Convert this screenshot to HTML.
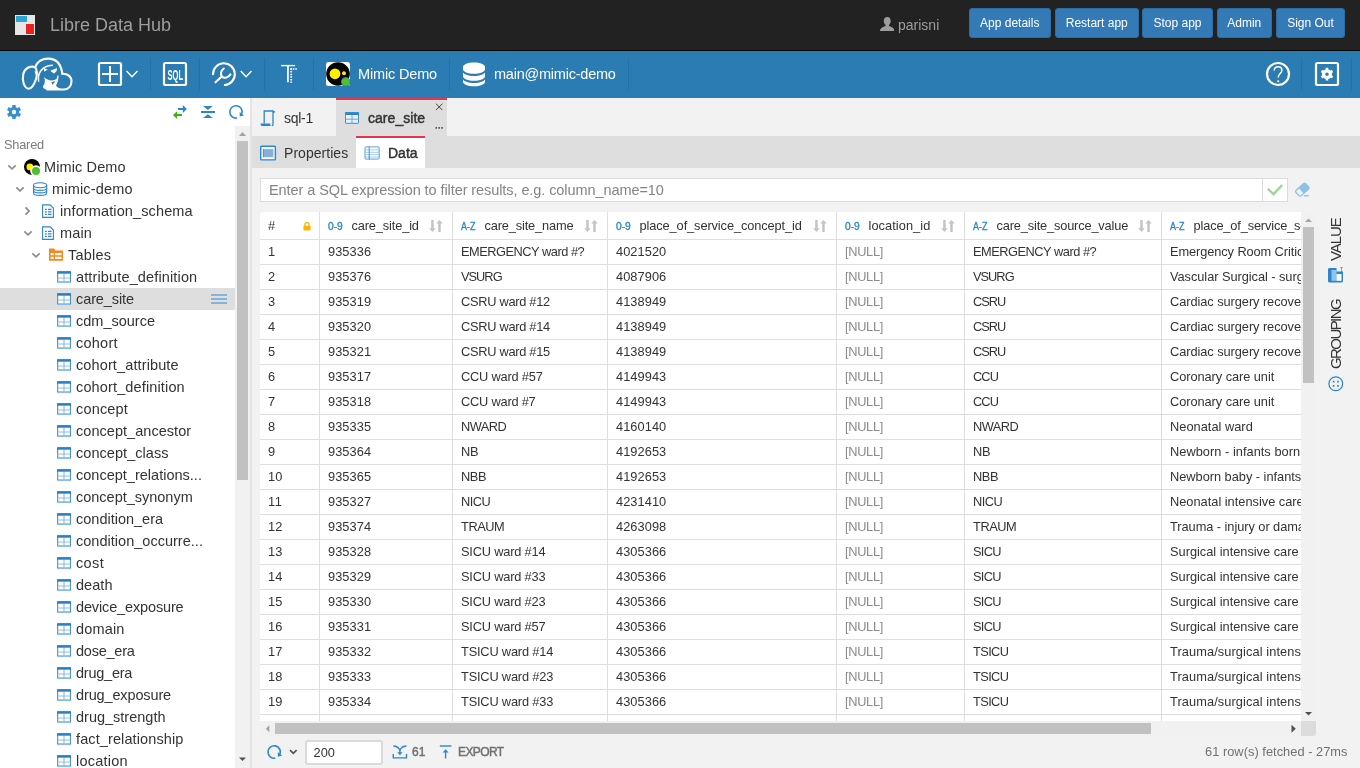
<!DOCTYPE html>
<html lang="en">
<head>
<meta charset="utf-8">
<title>Libre Data Hub</title>
<style>
*{box-sizing:border-box;margin:0;padding:0}
html{background:#f2f2f2}
html,body{width:1360px;height:768px;overflow:hidden;background:#f2f2f2;font-family:"Liberation Sans",sans-serif;color:#333}
body{will-change:transform}
.abs{position:absolute}
/* navbar */
#nav{position:absolute;left:0;top:0;width:1360px;height:51px;background:#222;border-bottom:1px solid #080808}
#logo{position:absolute;left:15px;top:15px;width:20px;height:20px;background:#e6e6e6}
#logo i{position:absolute;display:block}
#brand{position:absolute;left:50px;top:15px;font-size:18px;line-height:21px;color:#9d9d9d;white-space:nowrap}
#user{position:absolute;left:898px;top:15px;font-size:14px;line-height:20px;color:#9d9d9d;white-space:nowrap}
.btn{position:absolute;top:8px;height:30px;background:#337ab7;border:1px solid #2e6da4;border-radius:3px;color:#fff;font-size:12px;line-height:28px;text-align:center;white-space:nowrap}
/* blue toolbar */
#bar{position:absolute;left:0;top:51px;width:1360px;height:47px;background:#2a7cb3}
#bar .sep{position:absolute;top:7px;width:1px;height:32px;background:#2670a5}
#bar .txt{position:absolute;top:12.600px;font-size:14.500px;line-height:20px;color:#fff;white-space:nowrap}
/* sidebar */
#side{position:absolute;left:0;top:98px;width:235px;height:670px;background:#fff;overflow:hidden}
#sbar{position:absolute;left:235px;top:126px;width:15px;height:642px;background:#f1f1f1}
#sthumb{position:absolute;left:2px;top:15px;width:11px;height:339px;background:#c1c1c1}
#split{position:absolute;left:250px;top:98px;width:2px;height:670px;background:#e4e4e4}
.trow{position:absolute;left:0;width:235px;height:22px;font-size:14.500px;line-height:22px;white-space:nowrap}
.trow.sel{background:#dedede}
.tl{position:absolute;top:0;color:#333}
.ti{position:absolute;left:56px;top:3px;width:16px;height:16px}
.menu{position:absolute;left:211px;top:6px;width:16px;height:10px}
.chev{position:absolute;width:10px;height:10px}
/* main */
#tabs{position:absolute;left:252px;top:98px;width:1108px;height:38px;background:#f2f2f2}
.med{-webkit-text-stroke:0.450px currentColor}
.tabtxt{position:absolute;font-size:14px;line-height:20px;white-space:nowrap;color:#333}
#tab2{position:absolute;left:84px;top:0;width:111px;height:38px;background:#dedede;border-top:2px solid #e9334d}
#sub{position:absolute;left:252px;top:136px;width:1108px;height:32px;background:#dedede}
#sub2{position:absolute;left:104px;top:0;width:69px;height:32px;background:#fff;border-top:2px solid #e9334d}
#filter{position:absolute;left:260px;top:178px;width:1003px;height:24px;background:#fff;border:1px solid #dcdcdc;font-size:14.500px;line-height:22px;color:#848484;padding-left:8px;white-space:nowrap}
#ok{position:absolute;left:1262px;top:178px;width:26px;height:24px;background:#fff;border:1px solid #dcdcdc}
/* grid */
#grid{position:absolute;left:260px;top:212px;width:1041px;height:509px;background:#fff;overflow:hidden;border-radius:3px 0 0 0}
.th,.tr{position:relative;width:1100px;border-bottom:1px solid #dedede}
.th{height:28px}
.tr{height:25px}
.c{position:absolute;top:0;height:100%;border-right:1px solid #dedede;font-size:12.800px;line-height:24px;padding-left:8px;white-space:nowrap;overflow:hidden;color:#333}
.th .c{line-height:27px}
.c0{left:0;width:60px;padding-left:8px}
.c1{left:60px;width:133px}
.c2{left:193px;width:155px}
.c3{left:348px;width:229px}
.c4{left:577px;width:128px}
.c5{left:705px;width:197px}
.c6{left:902px;width:200px}
.nul{color:#8a8a8a}
.ty{display:inline-block;width:14px;margin-right:9.500px;color:#2b86cc;font-size:11px;line-height:12px;letter-spacing:0;white-space:nowrap;position:relative;top:-0.500px;transform-origin:0 50%;transform:scaleX(.93);-webkit-text-stroke:0.350px #2b86cc}
.ty.az{transform:scaleX(.820)}
.srt{position:absolute;right:9px;top:8px;width:14px;height:12px}
#vsb{position:absolute;left:1301px;top:212px;width:15px;height:509px;background:#f1f1f1}
#hsb{position:absolute;left:260px;top:721px;width:1041px;height:15px;background:#f1f1f1}
#corner{position:absolute;left:1301px;top:721px;width:15px;height:15px;background:#dcdcdc;border-radius:0 0 3px 0}
.vt{position:absolute;font-size:15px;color:#333;transform:rotate(-90deg);transform-origin:0 0;white-space:nowrap;line-height:16px}
#foot{position:absolute;left:252px;top:737px;width:1108px;height:31px;background:#f2f2f2}
#foot .t{position:absolute;font-size:13px;line-height:16px;white-space:nowrap;color:#717171}
#cnt{position:absolute;left:52.500px;top:2.500px;width:78.500px;height:25px;background:#fff;border:2px solid #dadada;border-radius:3px;font-size:12.800px;line-height:21px;padding-left:7px;color:#333}
</style>
</head>
<body>
<!-- top navbar -->
<div id="nav">
  <div id="logo"><i style="left:1px;top:1px;width:11.300px;height:6.200px;background:#2ea5d6"></i><i style="left:11.200px;top:8.500px;width:8.300px;height:10.700px;background:#e8201f"></i></div>
  <div id="brand">Libre Data Hub</div>
  <svg class="abs" style="left:879.800px;top:16.800px;width:14.500px;height:14.400px" viewBox="0 0 14.500 14.400"><path d="M7.250 0c-2.100 0-3.450 1.600-3.450 3.900 0 1.600 0.700 3.200 1.750 4.100v1.100c-2 0.800-4.500 1.600-5.200 3.200-0.300 0.700-0.350 1.500-0.350 2.100h14.500c0-0.600-0.050-1.400-0.350-2.100-0.700-1.600-3.200-2.400-5.200-3.200v-1.100c1.050-0.900 1.750-2.500 1.750-4.100 0-2.300-1.350-3.900-3.450-3.900z" fill="#9d9d9d"/></svg>
  <div id="user">parisni</div>
  <div class="btn" style="left:969px;width:81.500px">App details</div>
  <div class="btn" style="left:1055px;width:83.500px">Restart app</div>
  <div class="btn" style="left:1142px;width:71px">Stop app</div>
  <div class="btn" style="left:1216.500px;width:55.500px">Admin</div>
  <div class="btn" style="left:1276px;width:69px">Sign Out</div>
</div>
<!-- blue bar -->
<div id="bar">
<svg class="abs" style="left:0;top:0;width:1360px;height:47px" viewBox="0 51 1360 47" fill="none" stroke="#fff">
  <!-- cloud logo -->
  <g stroke-width="2.100" stroke-linecap="round" stroke-linejoin="round">
    <path d="M35.200 67.200C31 65.500 25 67.500 23.300 74C21.800 80.500 24 87.800 28.600 88.800C32 88.500 34.500 84 36.200 78.500C37.200 75 37 70 35.200 67.200z"/>
    <path d="M35.200 67.200C37 61.500 42.500 58.600 48.200 58.600C55.500 58.600 61 63.500 62.300 73.800"/>
    <path d="M62.300 73.800C67.500 73.500 71.500 76.500 71.500 81.200C71.500 86 68.500 89.500 64 89.500L47 89.500"/>
    <path d="M38.600 81.200C37.500 74 41 66 52.400 65.200" stroke-width="1.500"/>
  </g>
  <g fill="#fff" stroke="none">
    <path d="M34.500 71.500L37 71L35.800 75z"/>
    <path d="M44 68.300L47.700 69.400L44.200 71.700z"/>
    <path d="M50.300 70.700L57 68L56.600 71L54 73.800z"/>
    <path d="M44 77C47 80.500 53 81.500 56.500 79L57.500 75.500L58.600 75.400C58.500 79 57.500 83 56 85.500C57 87.500 60 89 64 89.600L47.200 89.900C44 89 42.500 87.500 43 86.300C45 84 45.500 80.500 44 77z"/>
  </g>
  <path d="M51.300 82.300L55.500 81L52.600 84.800z" fill="#2a7cb3" stroke="none"/>
  <!-- plus box -->
  <rect x="99" y="63" width="22" height="22" rx="1.500" stroke-width="2.200"/>
  <path d="M102 74h16M110 66v16" stroke-width="2"/>
  <path d="M126.500 71.100l5.500 5.600 5.500-5.600" stroke-width="1.400"/>
  <!-- sql -->
  <rect x="164" y="63" width="22" height="22" rx="1.500" stroke-width="2.200"/>
  <text x="175.300" y="79.700" text-anchor="middle" font-family="Liberation Sans, sans-serif" font-weight="bold" font-size="14.500" fill="#fff" stroke="none" textLength="15.500" lengthAdjust="spacingAndGlyphs">SQL</text>
  <!-- history/search -->
  <path d="M213 74.200A10.900 10.900 0 1 1 224.900 85.050" stroke-width="2.100" stroke-linecap="round"/>
  <path d="M215.500 82.300l5.400-5.100" stroke-width="2.100" stroke-linecap="round"/>
  <path d="M223.800 68.500C221 70.500 220 74 222 76.600C224.500 78.800 228.500 77.500 230.400 74.400" stroke-width="2.100" stroke-linecap="round"/>
  <path d="M240.700 71.100l5.400 5.600 5.400-5.600" stroke-width="1.400"/>
  <!-- T icon -->
  <path d="M281 65.600h14.100" stroke-width="1.400"/>
  <path d="M287.900 65v17.300" stroke-width="1.800"/>
  <path d="M290.300 69.100h6.700" stroke-width="1.500" stroke-dasharray="1.600 0.900"/>
  <path d="M291.200 68.350v14.500" stroke-width="1.800" stroke-dasharray="1.500 1.150"/>
  <!-- mimic icon -->
  <rect x="326" y="62" width="24" height="24" rx="2.500" fill="#fff" stroke="none"/>
  <circle cx="338" cy="74" r="11.800" fill="#000" stroke="none"/>
  <circle cx="335" cy="73.800" r="5.400" fill="#ffee00" stroke="none"/>
  <circle cx="344" cy="73.300" r="2" fill="#ffee00" stroke="none"/>
  <circle cx="345.700" cy="81.800" r="4.800" fill="#2a7cb3" stroke="none"/>
  <circle cx="345.700" cy="81.800" r="3.900" fill="#4fc22a" stroke="none"/>
  <!-- db icon -->
  <g fill="#fff" stroke="none">
    <path d="M463 67c0-2.500 4.900-4.500 11-4.500s11 2 11 4.500v2.300c0 2.500-4.900 4.500-11 4.500s-11-2-11-4.500z"/>
    <path d="M463 72.500c1.500 2.200 5.800 3.600 11 3.600s9.500-1.400 11-3.600v3.800c0 2.500-4.900 4.500-11 4.500s-11-2-11-4.500z"/>
    <path d="M463 79.500c1.500 2.200 5.800 3.600 11 3.600s9.500-1.400 11-3.600v2.300c0 2.500-4.900 4.500-11 4.500s-11-2-11-4.500z"/>
  </g>
  <!-- help -->
  <circle cx="1278" cy="74" r="11" stroke-width="2.200"/>
  <path d="M1274.200 70.600c0-2.300 1.700-3.800 3.900-3.800 2.300 0 3.800 1.500 3.800 3.500 0 3-3.700 3.500-3.700 7.200" stroke-width="1.500"/>
  <circle cx="1278.200" cy="81.300" r="1.100" fill="#fff" stroke="none"/>
  <!-- settings -->
  <rect x="1316" y="63" width="22" height="22" rx="1.500" stroke-width="2.200"/>
  <g transform="translate(1327 74.200)">
    <circle r="3.400" stroke-width="3.200"/>
    <g stroke-width="2.600">
      <path d="M0-6.400v2.500M0 6.400v-2.500M-5.540-3.200l2.200 1.250M5.540 3.200l-2.200-1.250M-5.540 3.200l2.200-1.250M5.540-3.200l-2.200 1.250"/>
    </g>
  </g>
</svg>
  <div class="sep" style="left:150px"></div>
  <div class="sep" style="left:199px"></div>
  <div class="sep" style="left:264px"></div>
  <div class="sep" style="left:313px"></div>
  <div class="sep" style="left:449px"></div>
  <div class="sep" style="left:628px"></div>
  <div class="sep" style="left:1301px"></div>
  <div class="sep" style="left:1351px"></div>
  <div class="txt" style="left:358px"><span style="letter-spacing:-0.16px">Mimic Demo</span></div>
  <div class="txt" style="left:494px"><span style="letter-spacing:-0.23px">main@mimic-demo</span></div>
</div>
<!-- sidebar -->
<div id="side"></div>
<div class="abs" style="left:235px;top:98px;width:15px;height:28px;background:#fff"></div>
<svg class="abs" style="left:0;top:98px;width:250px;height:170px" viewBox="0 98 250 170" fill="none">
  <!-- gear -->
  <g transform="translate(14 112)" stroke="#338fd0">
    <circle r="3.700" stroke-width="3"/>
    <path d="M0-7.100v2.500M0 7.100v-2.500M-6.150-3.550l2.200 1.250M6.150 3.550l-2.200-1.250M-6.150 3.550l2.200-1.250M6.150-3.550l-2.200 1.250" stroke-width="3.400"/>
  </g>
  <!-- arrows -->
  <path d="M178 108h5v1.900h-5zM182.800 105l4.100 3.950-4.100 3.950z" fill="#2d86cc"/>
  <path d="M182 114.100h-5v1.900h5zM177.100 111.200l-4.200 3.850 4.200 3.850z" fill="#3db50e"/>
  <!-- collapse -->
  <path d="M201 111h14v2h-14zM203 106h9.800l-4.900 4zM203 118h9.800l-4.900-3.800z" fill="#2d86cc"/>
  <!-- refresh -->
  <path d="M237.100 118A6.200 6.200 0 1 1 241.900 113.800" stroke="#2d86cc" stroke-width="1.600"/>
  <path d="M239.700 112.100v4.500l4.300-1.200z" fill="#2d86cc"/>
  <!-- chevrons -->
  <g stroke="#8c8c8c" stroke-width="1.700">
    <path d="M8.300 165.300l3.700 3.500 3.700-3.500"/>
    <path d="M16.300 187.300l3.700 3.500 3.700-3.500"/>
    <path d="M25.500 207.300l3.600 3.700-3.600 3.700"/>
    <path d="M24.300 231.300l3.700 3.500 3.700-3.500"/>
    <path d="M32.300 253.300l3.700 3.500 3.700-3.500"/>
  </g>
  <!-- mimic icon -->
  <circle cx="32" cy="166.900" r="8" fill="#000"/>
  <circle cx="29.900" cy="166.900" r="3.400" fill="#ffee00"/>
  <circle cx="36" cy="171" r="5.800" fill="#fff"/>
  <circle cx="36" cy="171" r="4" fill="#4fc22a"/>
  <!-- db icon -->
  <g stroke="#2d86cc" stroke-width="1.100" fill="#fff">
    <path d="M33.500 185.300v7.600c0 1.400 2.900 2.500 6.600 2.500s6.600-1.100 6.600-2.500v-7.600"/>
    <ellipse cx="40.100" cy="185.300" rx="6.600" ry="2.500"/>
    <path d="M33.500 187.900c0 1.400 2.900 2.500 6.600 2.500s6.600-1.100 6.600-2.500M33.500 190.400c0 1.400 2.900 2.500 6.600 2.500s6.600-1.100 6.600-2.500" fill="none"/>
  </g>
  <!-- schema icons -->
  <g id="schemaicon">
    <path d="M42.600 204.900h7.600l3.200 3.200v9.300h-10.800z" fill="#fff" stroke="#2d86cc" stroke-width="1.100"/>
    <path d="M45 209.300h1.800M48 209.300h3.500M45 211.800h1.800M48 211.800h3.500M45 214.300h1.800M48 214.300h3.500" stroke="#2d86cc" stroke-width="1.300"/>
  </g>
  <g transform="translate(0 22)">
    <path d="M42.600 204.900h7.600l3.200 3.200v9.300h-10.800z" fill="#fff" stroke="#2d86cc" stroke-width="1.100"/>
    <path d="M45 209.300h1.800M48 209.300h3.500M45 211.800h1.800M48 211.800h3.500M45 214.300h1.800M48 214.300h3.500" stroke="#2d86cc" stroke-width="1.300"/>
  </g>
  <!-- folder -->
  <path d="M49 248.600h5l1.500 2h7.500v10.200h-14z" fill="#f28a1e"/>
  <path d="M50.700 253h3v2.200h-3zM55 253h6.500v2.200h-6.500zM50.700 256.700h3v2.300h-3zM55 256.700h6.500v2.300h-6.500z" fill="#fff"/>
</svg>
<div class="abs" style="left:4px;top:137px;font-size:12.800px;line-height:16px;color:#7d7d7d"><span style="letter-spacing:-0.22px">Shared</span></div>
<div class="trow" style="top:156px"><span class="tl" style="left:44px"><span style="letter-spacing:0.12px">Mimic Demo</span></span></div>
<div class="trow" style="top:178px"><span class="tl" style="left:52px"><span style="letter-spacing:0.19px">mimic-demo</span></span></div>
<div class="trow" style="top:200px"><span class="tl" style="left:60px"><span style="letter-spacing:0.12px">information_schema</span></span></div>
<div class="trow" style="top:222px"><span class="tl" style="left:60px"><span style="letter-spacing:0.17px">main</span></span></div>
<div class="trow" style="top:244px"><span class="tl" style="left:68px"><span style="letter-spacing:0.24px">Tables</span></span></div>
<div class="trow" style="top:266px"><svg class="ti" viewBox="0 0 16 16"><rect x="1.700" y="2.800" width="12.700" height="10.300" fill="#fff" stroke="#2d86cc"/><path d="M8 4.700v8.400M1.700 9h12.700M2.200 13.100h11.700" stroke="#8fc0e6" stroke-width="1.200" fill="none"/><rect x="1.200" y="2.300" width="13.700" height="2.400" fill="#2580c8"/></svg><span class="tl" style="left:76px"><span style="letter-spacing:0.14px">attribute_definition</span></span></div>
<div class="trow sel" style="top:288px"><svg class="ti" viewBox="0 0 16 16"><rect x="1.700" y="2.800" width="12.700" height="10.300" fill="#fff" stroke="#2d86cc"/><path d="M8 4.700v8.400M1.700 9h12.700M2.200 13.100h11.700" stroke="#8fc0e6" stroke-width="1.200" fill="none"/><rect x="1.200" y="2.300" width="13.700" height="2.400" fill="#2580c8"/></svg><span class="tl" style="left:76px"><span style="letter-spacing:-0.09px">care_site</span></span><svg class="menu" viewBox="0 0 16 10"><path d="M0 1h16M0 5h16M0 9h16" stroke="#6aa5d8" stroke-width="1.3"/></svg></div>
<div class="trow" style="top:310px"><svg class="ti" viewBox="0 0 16 16"><rect x="1.700" y="2.800" width="12.700" height="10.300" fill="#fff" stroke="#2d86cc"/><path d="M8 4.700v8.400M1.700 9h12.700M2.200 13.100h11.700" stroke="#8fc0e6" stroke-width="1.200" fill="none"/><rect x="1.200" y="2.300" width="13.700" height="2.400" fill="#2580c8"/></svg><span class="tl" style="left:76px"><span style="letter-spacing:-0.00px">cdm_source</span></span></div>
<div class="trow" style="top:332px"><svg class="ti" viewBox="0 0 16 16"><rect x="1.700" y="2.800" width="12.700" height="10.300" fill="#fff" stroke="#2d86cc"/><path d="M8 4.700v8.400M1.700 9h12.700M2.200 13.100h11.700" stroke="#8fc0e6" stroke-width="1.200" fill="none"/><rect x="1.200" y="2.300" width="13.700" height="2.400" fill="#2580c8"/></svg><span class="tl" style="left:76px"><span style="letter-spacing:0.24px">cohort</span></span></div>
<div class="trow" style="top:354px"><svg class="ti" viewBox="0 0 16 16"><rect x="1.700" y="2.800" width="12.700" height="10.300" fill="#fff" stroke="#2d86cc"/><path d="M8 4.700v8.400M1.700 9h12.700M2.200 13.100h11.700" stroke="#8fc0e6" stroke-width="1.200" fill="none"/><rect x="1.200" y="2.300" width="13.700" height="2.400" fill="#2580c8"/></svg><span class="tl" style="left:76px"><span style="letter-spacing:0.12px">cohort_attribute</span></span></div>
<div class="trow" style="top:376px"><svg class="ti" viewBox="0 0 16 16"><rect x="1.700" y="2.800" width="12.700" height="10.300" fill="#fff" stroke="#2d86cc"/><path d="M8 4.700v8.400M1.700 9h12.700M2.200 13.100h11.700" stroke="#8fc0e6" stroke-width="1.200" fill="none"/><rect x="1.200" y="2.300" width="13.700" height="2.400" fill="#2580c8"/></svg><span class="tl" style="left:76px"><span style="letter-spacing:0.14px">cohort_definition</span></span></div>
<div class="trow" style="top:398px"><svg class="ti" viewBox="0 0 16 16"><rect x="1.700" y="2.800" width="12.700" height="10.300" fill="#fff" stroke="#2d86cc"/><path d="M8 4.700v8.400M1.700 9h12.700M2.200 13.100h11.700" stroke="#8fc0e6" stroke-width="1.200" fill="none"/><rect x="1.200" y="2.300" width="13.700" height="2.400" fill="#2580c8"/></svg><span class="tl" style="left:76px"><span style="letter-spacing:0.17px">concept</span></span></div>
<div class="trow" style="top:420px"><svg class="ti" viewBox="0 0 16 16"><rect x="1.700" y="2.800" width="12.700" height="10.300" fill="#fff" stroke="#2d86cc"/><path d="M8 4.700v8.400M1.700 9h12.700M2.200 13.100h11.700" stroke="#8fc0e6" stroke-width="1.200" fill="none"/><rect x="1.200" y="2.300" width="13.700" height="2.400" fill="#2580c8"/></svg><span class="tl" style="left:76px"><span style="letter-spacing:0.04px">concept_ancestor</span></span></div>
<div class="trow" style="top:442px"><svg class="ti" viewBox="0 0 16 16"><rect x="1.700" y="2.800" width="12.700" height="10.300" fill="#fff" stroke="#2d86cc"/><path d="M8 4.700v8.400M1.700 9h12.700M2.200 13.100h11.700" stroke="#8fc0e6" stroke-width="1.200" fill="none"/><rect x="1.200" y="2.300" width="13.700" height="2.400" fill="#2580c8"/></svg><span class="tl" style="left:76px"><span style="letter-spacing:0.05px">concept_class</span></span></div>
<div class="trow" style="top:464px"><svg class="ti" viewBox="0 0 16 16"><rect x="1.700" y="2.800" width="12.700" height="10.300" fill="#fff" stroke="#2d86cc"/><path d="M8 4.700v8.400M1.700 9h12.700M2.200 13.100h11.700" stroke="#8fc0e6" stroke-width="1.200" fill="none"/><rect x="1.200" y="2.300" width="13.700" height="2.400" fill="#2580c8"/></svg><span class="tl" style="left:76px"><span style="letter-spacing:0.01px">concept_relations...</span></span></div>
<div class="trow" style="top:486px"><svg class="ti" viewBox="0 0 16 16"><rect x="1.700" y="2.800" width="12.700" height="10.300" fill="#fff" stroke="#2d86cc"/><path d="M8 4.700v8.400M1.700 9h12.700M2.200 13.100h11.700" stroke="#8fc0e6" stroke-width="1.200" fill="none"/><rect x="1.200" y="2.300" width="13.700" height="2.400" fill="#2580c8"/></svg><span class="tl" style="left:76px"><span style="letter-spacing:-0.01px">concept_synonym</span></span></div>
<div class="trow" style="top:508px"><svg class="ti" viewBox="0 0 16 16"><rect x="1.700" y="2.800" width="12.700" height="10.300" fill="#fff" stroke="#2d86cc"/><path d="M8 4.700v8.400M1.700 9h12.700M2.200 13.100h11.700" stroke="#8fc0e6" stroke-width="1.200" fill="none"/><rect x="1.200" y="2.300" width="13.700" height="2.400" fill="#2580c8"/></svg><span class="tl" style="left:76px"><span style="letter-spacing:0.00px">condition_era</span></span></div>
<div class="trow" style="top:530px"><svg class="ti" viewBox="0 0 16 16"><rect x="1.700" y="2.800" width="12.700" height="10.300" fill="#fff" stroke="#2d86cc"/><path d="M8 4.700v8.400M1.700 9h12.700M2.200 13.100h11.700" stroke="#8fc0e6" stroke-width="1.200" fill="none"/><rect x="1.200" y="2.300" width="13.700" height="2.400" fill="#2580c8"/></svg><span class="tl" style="left:76px"><span style="letter-spacing:0.02px">condition_occurre...</span></span></div>
<div class="trow" style="top:552px"><svg class="ti" viewBox="0 0 16 16"><rect x="1.700" y="2.800" width="12.700" height="10.300" fill="#fff" stroke="#2d86cc"/><path d="M8 4.700v8.400M1.700 9h12.700M2.200 13.100h11.700" stroke="#8fc0e6" stroke-width="1.200" fill="none"/><rect x="1.200" y="2.300" width="13.700" height="2.400" fill="#2580c8"/></svg><span class="tl" style="left:76px"><span style="letter-spacing:0.37px">cost</span></span></div>
<div class="trow" style="top:574px"><svg class="ti" viewBox="0 0 16 16"><rect x="1.700" y="2.800" width="12.700" height="10.300" fill="#fff" stroke="#2d86cc"/><path d="M8 4.700v8.400M1.700 9h12.700M2.200 13.100h11.700" stroke="#8fc0e6" stroke-width="1.200" fill="none"/><rect x="1.200" y="2.300" width="13.700" height="2.400" fill="#2580c8"/></svg><span class="tl" style="left:76px"><span style="letter-spacing:0.04px">death</span></span></div>
<div class="trow" style="top:596px"><svg class="ti" viewBox="0 0 16 16"><rect x="1.700" y="2.800" width="12.700" height="10.300" fill="#fff" stroke="#2d86cc"/><path d="M8 4.700v8.400M1.700 9h12.700M2.200 13.100h11.700" stroke="#8fc0e6" stroke-width="1.200" fill="none"/><rect x="1.200" y="2.300" width="13.700" height="2.400" fill="#2580c8"/></svg><span class="tl" style="left:76px"><span style="letter-spacing:-0.14px">device_exposure</span></span></div>
<div class="trow" style="top:618px"><svg class="ti" viewBox="0 0 16 16"><rect x="1.700" y="2.800" width="12.700" height="10.300" fill="#fff" stroke="#2d86cc"/><path d="M8 4.700v8.400M1.700 9h12.700M2.200 13.100h11.700" stroke="#8fc0e6" stroke-width="1.200" fill="none"/><rect x="1.200" y="2.300" width="13.700" height="2.400" fill="#2580c8"/></svg><span class="tl" style="left:76px"><span style="letter-spacing:0.17px">domain</span></span></div>
<div class="trow" style="top:640px"><svg class="ti" viewBox="0 0 16 16"><rect x="1.700" y="2.800" width="12.700" height="10.300" fill="#fff" stroke="#2d86cc"/><path d="M8 4.700v8.400M1.700 9h12.700M2.200 13.100h11.700" stroke="#8fc0e6" stroke-width="1.200" fill="none"/><rect x="1.200" y="2.300" width="13.700" height="2.400" fill="#2580c8"/></svg><span class="tl" style="left:76px"><span style="letter-spacing:-0.23px">dose_era</span></span></div>
<div class="trow" style="top:662px"><svg class="ti" viewBox="0 0 16 16"><rect x="1.700" y="2.800" width="12.700" height="10.300" fill="#fff" stroke="#2d86cc"/><path d="M8 4.700v8.400M1.700 9h12.700M2.200 13.100h11.700" stroke="#8fc0e6" stroke-width="1.200" fill="none"/><rect x="1.200" y="2.300" width="13.700" height="2.400" fill="#2580c8"/></svg><span class="tl" style="left:76px"><span style="letter-spacing:-0.23px">drug_era</span></span></div>
<div class="trow" style="top:684px"><svg class="ti" viewBox="0 0 16 16"><rect x="1.700" y="2.800" width="12.700" height="10.300" fill="#fff" stroke="#2d86cc"/><path d="M8 4.700v8.400M1.700 9h12.700M2.200 13.100h11.700" stroke="#8fc0e6" stroke-width="1.200" fill="none"/><rect x="1.200" y="2.300" width="13.700" height="2.400" fill="#2580c8"/></svg><span class="tl" style="left:76px"><span style="letter-spacing:-0.13px">drug_exposure</span></span></div>
<div class="trow" style="top:706px"><svg class="ti" viewBox="0 0 16 16"><rect x="1.700" y="2.800" width="12.700" height="10.300" fill="#fff" stroke="#2d86cc"/><path d="M8 4.700v8.400M1.700 9h12.700M2.200 13.100h11.700" stroke="#8fc0e6" stroke-width="1.200" fill="none"/><rect x="1.200" y="2.300" width="13.700" height="2.400" fill="#2580c8"/></svg><span class="tl" style="left:76px"><span style="letter-spacing:-0.00px">drug_strength</span></span></div>
<div class="trow" style="top:728px"><svg class="ti" viewBox="0 0 16 16"><rect x="1.700" y="2.800" width="12.700" height="10.300" fill="#fff" stroke="#2d86cc"/><path d="M8 4.700v8.400M1.700 9h12.700M2.200 13.100h11.700" stroke="#8fc0e6" stroke-width="1.200" fill="none"/><rect x="1.200" y="2.300" width="13.700" height="2.400" fill="#2580c8"/></svg><span class="tl" style="left:76px"><span style="letter-spacing:0.11px">fact_relationship</span></span></div>
<div class="trow" style="top:750px"><svg class="ti" viewBox="0 0 16 16"><rect x="1.700" y="2.800" width="12.700" height="10.300" fill="#fff" stroke="#2d86cc"/><path d="M8 4.700v8.400M1.700 9h12.700M2.200 13.100h11.700" stroke="#8fc0e6" stroke-width="1.200" fill="none"/><rect x="1.200" y="2.300" width="13.700" height="2.400" fill="#2580c8"/></svg><span class="tl" style="left:76px"><span style="letter-spacing:0.23px">location</span></span></div>
<div id="sbar"><div id="sthumb"></div></div>
<div id="split"></div>
<!-- tabs -->
<div id="tabs">
  <div class="tabtxt" style="left:32px;top:10px"><span style="letter-spacing:-0.27px">sql-1</span></div>
  <div id="tab2"><div class="tabtxt med" style="left:32px;top:8px"><span style="letter-spacing:0.04px">care_site</span></div></div>
</div>
<div id="sub">
  <div class="tabtxt" style="left:32px;top:7px"><span style="letter-spacing:0.04px">Properties</span></div>
  <div id="sub2"><div class="tabtxt med" style="left:32px;top:5px"><span style="letter-spacing:-0.00px">Data</span></div></div>
</div>
<svg class="abs" style="left:252px;top:98px;width:200px;height:70px" viewBox="252 98 200 70" fill="none">
  <!-- script icon -->
  <path d="M264.200 123.500v-12.500h8.800v13.500c0 0.800-0.600 1.200-1.200 1.200" stroke="#2d86cc" stroke-width="1.300"/>
  <path d="M273 112.800v-1.800h1.800v1.800z" fill="#2d86cc"/>
  <path d="M260.700 123.500h9.600v1.200c0 0.800 0.600 1.200 1.300 1.200h-9.600c-0.800 0-1.300-0.500-1.300-1.200z" fill="#2d86cc"/>
  <!-- table icon (tab) -->
  <rect x="345.500" y="112.700" width="13" height="10.600" rx="0.400" fill="#e9f2fa" stroke="#3d8fd1" stroke-width="1"/>
  <rect x="345" y="112.200" width="14" height="2.800" fill="#2d86cc"/>
  <path d="M352 115v8.300M345.500 119.200h13" stroke="#6aa5d8" stroke-width="1"/>
  <!-- close x -->
  <path d="M436 103.700l6.400 6.400M442.400 103.700l-6.400 6.400" stroke="#333" stroke-width="0.900"/>
  <!-- dots -->
  <path d="M435.500 127.100h1.600v1.600h-1.600zM438.400 127.100h1.600v1.600h-1.600zM441.300 127.100h1.600v1.600h-1.600z" fill="#555"/>
  <!-- properties icon -->
  <rect x="260.700" y="146.200" width="14.700" height="13.700" rx="0.800" fill="#f3f7fb" stroke="#2d86cc" stroke-width="1.400"/>
  <rect x="263.300" y="149.100" width="10" height="8" fill="#85b1d9"/>
  <path d="M263.400 149v8.200" stroke="#2d86cc" stroke-width="0.800"/>
  <!-- data icon -->
  <rect x="365" y="146.900" width="14.200" height="12.300" rx="1.500" fill="#fff" stroke="#7ab5e6" stroke-width="1.300"/>
  <path d="M365 149.800h14M365 152.300h14M365 154.700h14M365 157.100h14" stroke="#8ec0ea" stroke-width="0.800"/>
  <path d="M369.200 146.500v13" stroke="#2d86cc" stroke-width="0.900"/>
</svg>
<div id="filter"><span style="letter-spacing:-0.08px">Enter a SQL expression to filter results, e.g. column_name=10</span></div>
<div id="ok"></div>
<svg class="abs" style="left:1260px;top:176px;width:60px;height:28px" viewBox="1260 176 60 28" fill="none">
  <path d="M1267.800 188.800l5.700 5.300 8.600-9" stroke="#9fd49b" stroke-width="2.300"/>
  <g transform="translate(1302.300 189.700) rotate(-42)">
    <rect x="-6.500" y="-3.700" width="13" height="7.400" rx="1.600" stroke="#8fc0e6" stroke-width="1.300"/>
    <path d="M-1.500 -3.700h6.400a1.600 1.600 0 0 1 1.600 1.600v4.200a1.600 1.600 0 0 1-1.600 1.600h-6.400z" fill="#8fc0e6"/>
  </g>
  <path d="M1304 195.800h5" stroke="#8fc0e6" stroke-width="1.300"/>
</svg>
<!-- grid -->
<div id="grid">
  <div class="th"><span class="c c0"><span style="letter-spacing:0.76px">#</span><svg class="abs" style="left:43px;top:10px;width:8px;height:9px" viewBox="0 0 8 9"><path d="M1.900 4v-1.300a2.100 2.100 0 0 1 4.200 0v1.300" fill="none" stroke="#ffb300" stroke-width="1.300"/><rect x="0.500" y="3.700" width="7" height="4.800" rx="0.500" fill="#ffb300"/></svg></span><span class="c c1"><span class="ty">0-9</span><span style="letter-spacing:-0.14px">care_site_id</span><svg class="srt" viewBox="0 0 14 12"><path d="M2.200 0.100h2.500v8.100h2.050l-3.300 3.800-3.300-3.800h2.050zM9.250 11.900h2.500v-8.400h2.050l-3.300-3.400-3.300 3.400h2.050z" fill="#c4c4c4"/></svg></span><span class="c c2"><span class="ty az">A-Z</span><span style="letter-spacing:-0.15px">care_site_name</span><svg class="srt" viewBox="0 0 14 12"><path d="M2.200 0.100h2.500v8.100h2.050l-3.300 3.800-3.300-3.800h2.050zM9.250 11.900h2.500v-8.400h2.050l-3.300-3.400-3.300 3.400h2.050z" fill="#c4c4c4"/></svg></span><span class="c c3"><span class="ty">0-9</span><span style="letter-spacing:-0.10px">place_of_service_concept_id</span><svg class="srt" viewBox="0 0 14 12"><path d="M2.200 0.100h2.500v8.100h2.050l-3.300 3.800-3.300-3.800h2.050zM9.250 11.900h2.500v-8.400h2.050l-3.300-3.400-3.300 3.400h2.050z" fill="#c4c4c4"/></svg></span><span class="c c4"><span class="ty">0-9</span><span style="letter-spacing:0.06px">location_id</span><svg class="srt" viewBox="0 0 14 12"><path d="M2.200 0.100h2.500v8.100h2.050l-3.300 3.800-3.300-3.800h2.050zM9.250 11.900h2.500v-8.400h2.050l-3.300-3.400-3.300 3.400h2.050z" fill="#c4c4c4"/></svg></span><span class="c c5"><span class="ty az">A-Z</span><span style="letter-spacing:-0.16px">care_site_source_value</span><svg class="srt" viewBox="0 0 14 12"><path d="M2.200 0.100h2.500v8.100h2.050l-3.300 3.800-3.300-3.800h2.050zM9.250 11.900h2.500v-8.400h2.050l-3.300-3.400-3.300 3.400h2.050z" fill="#c4c4c4"/></svg></span><span class="c c6"><span class="ty az">A-Z</span><span style="letter-spacing:-0.15px">place_of_service_source_value</span></span></div>
<div class="tr"><span class="c c0"><span style="letter-spacing:0.07px">1</span></span><span class="c c1"><span style="letter-spacing:0.07px">935336</span></span><span class="c c2"><span style="letter-spacing:-0.48px">EMERGENCY ward #?</span></span><span class="c c3"><span style="letter-spacing:0.07px">4021520</span></span><span class="c c4 nul"><span style="letter-spacing:-0.31px">[NULL]</span></span><span class="c c5"><span style="letter-spacing:-0.48px">EMERGENCY ward #?</span></span><span class="c c6"><span style="letter-spacing:-0.09px">Emergency Room Critical Care Facility</span></span></div>
<div class="tr"><span class="c c0"><span style="letter-spacing:0.07px">2</span></span><span class="c c1"><span style="letter-spacing:0.07px">935376</span></span><span class="c c2"><span style="letter-spacing:-0.98px">VSURG</span></span><span class="c c3"><span style="letter-spacing:0.07px">4087906</span></span><span class="c c4 nul"><span style="letter-spacing:-0.31px">[NULL]</span></span><span class="c c5"><span style="letter-spacing:-0.98px">VSURG</span></span><span class="c c6"><span style="letter-spacing:-0.05px">Vascular Surgical - surgery</span></span></div>
<div class="tr"><span class="c c0"><span style="letter-spacing:0.07px">3</span></span><span class="c c1"><span style="letter-spacing:0.07px">935319</span></span><span class="c c2"><span style="letter-spacing:-0.28px">CSRU ward #12</span></span><span class="c c3"><span style="letter-spacing:0.07px">4138949</span></span><span class="c c4 nul"><span style="letter-spacing:-0.31px">[NULL]</span></span><span class="c c5"><span style="letter-spacing:-1.04px">CSRU</span></span><span class="c c6"><span style="letter-spacing:-0.06px">Cardiac surgery recovery unit</span></span></div>
<div class="tr"><span class="c c0"><span style="letter-spacing:0.07px">4</span></span><span class="c c1"><span style="letter-spacing:0.07px">935320</span></span><span class="c c2"><span style="letter-spacing:-0.28px">CSRU ward #14</span></span><span class="c c3"><span style="letter-spacing:0.07px">4138949</span></span><span class="c c4 nul"><span style="letter-spacing:-0.31px">[NULL]</span></span><span class="c c5"><span style="letter-spacing:-1.04px">CSRU</span></span><span class="c c6"><span style="letter-spacing:-0.06px">Cardiac surgery recovery unit</span></span></div>
<div class="tr"><span class="c c0"><span style="letter-spacing:0.07px">5</span></span><span class="c c1"><span style="letter-spacing:0.07px">935321</span></span><span class="c c2"><span style="letter-spacing:-0.28px">CSRU ward #15</span></span><span class="c c3"><span style="letter-spacing:0.07px">4138949</span></span><span class="c c4 nul"><span style="letter-spacing:-0.31px">[NULL]</span></span><span class="c c5"><span style="letter-spacing:-1.04px">CSRU</span></span><span class="c c6"><span style="letter-spacing:-0.06px">Cardiac surgery recovery unit</span></span></div>
<div class="tr"><span class="c c0"><span style="letter-spacing:0.07px">6</span></span><span class="c c1"><span style="letter-spacing:0.07px">935317</span></span><span class="c c2"><span style="letter-spacing:-0.19px">CCU ward #57</span></span><span class="c c3"><span style="letter-spacing:0.07px">4149943</span></span><span class="c c4 nul"><span style="letter-spacing:-0.31px">[NULL]</span></span><span class="c c5"><span style="letter-spacing:-0.92px">CCU</span></span><span class="c c6"><span style="letter-spacing:-0.06px">Coronary care unit</span></span></div>
<div class="tr"><span class="c c0"><span style="letter-spacing:0.07px">7</span></span><span class="c c1"><span style="letter-spacing:0.07px">935318</span></span><span class="c c2"><span style="letter-spacing:-0.21px">CCU ward #7</span></span><span class="c c3"><span style="letter-spacing:0.07px">4149943</span></span><span class="c c4 nul"><span style="letter-spacing:-0.31px">[NULL]</span></span><span class="c c5"><span style="letter-spacing:-0.92px">CCU</span></span><span class="c c6"><span style="letter-spacing:-0.06px">Coronary care unit</span></span></div>
<div class="tr"><span class="c c0"><span style="letter-spacing:0.07px">8</span></span><span class="c c1"><span style="letter-spacing:0.07px">935335</span></span><span class="c c2"><span style="letter-spacing:-0.55px">NWARD</span></span><span class="c c3"><span style="letter-spacing:0.07px">4160140</span></span><span class="c c4 nul"><span style="letter-spacing:-0.31px">[NULL]</span></span><span class="c c5"><span style="letter-spacing:-0.55px">NWARD</span></span><span class="c c6"><span style="letter-spacing:0.02px">Neonatal ward</span></span></div>
<div class="tr"><span class="c c0"><span style="letter-spacing:0.07px">9</span></span><span class="c c1"><span style="letter-spacing:0.07px">935364</span></span><span class="c c2"><span style="letter-spacing:-0.34px">NB</span></span><span class="c c3"><span style="letter-spacing:0.07px">4192653</span></span><span class="c c4 nul"><span style="letter-spacing:-0.31px">[NULL]</span></span><span class="c c5"><span style="letter-spacing:-0.34px">NB</span></span><span class="c c6"><span style="letter-spacing:0.03px">Newborn - infants born in hospital</span></span></div>
<div class="tr"><span class="c c0"><span style="letter-spacing:0.07px">10</span></span><span class="c c1"><span style="letter-spacing:0.07px">935365</span></span><span class="c c2"><span style="letter-spacing:-0.42px">NBB</span></span><span class="c c3"><span style="letter-spacing:0.07px">4192653</span></span><span class="c c4 nul"><span style="letter-spacing:-0.31px">[NULL]</span></span><span class="c c5"><span style="letter-spacing:-0.42px">NBB</span></span><span class="c c6"><span style="letter-spacing:-0.02px">Newborn baby - infants</span></span></div>
<div class="tr"><span class="c c0"><span style="letter-spacing:0.54px">11</span></span><span class="c c1"><span style="letter-spacing:0.07px">935327</span></span><span class="c c2"><span style="letter-spacing:-0.51px">NICU</span></span><span class="c c3"><span style="letter-spacing:0.07px">4231410</span></span><span class="c c4 nul"><span style="letter-spacing:-0.31px">[NULL]</span></span><span class="c c5"><span style="letter-spacing:-0.51px">NICU</span></span><span class="c c6"><span style="letter-spacing:0.00px">Neonatal intensive care unit</span></span></div>
<div class="tr"><span class="c c0"><span style="letter-spacing:0.07px">12</span></span><span class="c c1"><span style="letter-spacing:0.07px">935374</span></span><span class="c c2"><span style="letter-spacing:-0.43px">TRAUM</span></span><span class="c c3"><span style="letter-spacing:0.07px">4263098</span></span><span class="c c4 nul"><span style="letter-spacing:-0.31px">[NULL]</span></span><span class="c c5"><span style="letter-spacing:-0.43px">TRAUM</span></span><span class="c c6"><span style="letter-spacing:-0.05px">Trauma - injury or damage</span></span></div>
<div class="tr"><span class="c c0"><span style="letter-spacing:0.07px">13</span></span><span class="c c1"><span style="letter-spacing:0.07px">935328</span></span><span class="c c2"><span style="letter-spacing:-0.18px">SICU ward #14</span></span><span class="c c3"><span style="letter-spacing:0.07px">4305366</span></span><span class="c c4 nul"><span style="letter-spacing:-0.31px">[NULL]</span></span><span class="c c5"><span style="letter-spacing:-0.72px">SICU</span></span><span class="c c6"><span style="letter-spacing:-0.01px">Surgical intensive care unit</span></span></div>
<div class="tr"><span class="c c0"><span style="letter-spacing:0.07px">14</span></span><span class="c c1"><span style="letter-spacing:0.07px">935329</span></span><span class="c c2"><span style="letter-spacing:-0.18px">SICU ward #33</span></span><span class="c c3"><span style="letter-spacing:0.07px">4305366</span></span><span class="c c4 nul"><span style="letter-spacing:-0.31px">[NULL]</span></span><span class="c c5"><span style="letter-spacing:-0.72px">SICU</span></span><span class="c c6"><span style="letter-spacing:-0.01px">Surgical intensive care unit</span></span></div>
<div class="tr"><span class="c c0"><span style="letter-spacing:0.07px">15</span></span><span class="c c1"><span style="letter-spacing:0.07px">935330</span></span><span class="c c2"><span style="letter-spacing:-0.18px">SICU ward #23</span></span><span class="c c3"><span style="letter-spacing:0.07px">4305366</span></span><span class="c c4 nul"><span style="letter-spacing:-0.31px">[NULL]</span></span><span class="c c5"><span style="letter-spacing:-0.72px">SICU</span></span><span class="c c6"><span style="letter-spacing:-0.01px">Surgical intensive care unit</span></span></div>
<div class="tr"><span class="c c0"><span style="letter-spacing:0.07px">16</span></span><span class="c c1"><span style="letter-spacing:0.07px">935331</span></span><span class="c c2"><span style="letter-spacing:-0.18px">SICU ward #57</span></span><span class="c c3"><span style="letter-spacing:0.07px">4305366</span></span><span class="c c4 nul"><span style="letter-spacing:-0.31px">[NULL]</span></span><span class="c c5"><span style="letter-spacing:-0.72px">SICU</span></span><span class="c c6"><span style="letter-spacing:-0.01px">Surgical intensive care unit</span></span></div>
<div class="tr"><span class="c c0"><span style="letter-spacing:0.07px">17</span></span><span class="c c1"><span style="letter-spacing:0.07px">935332</span></span><span class="c c2"><span style="letter-spacing:-0.18px">TSICU ward #14</span></span><span class="c c3"><span style="letter-spacing:0.07px">4305366</span></span><span class="c c4 nul"><span style="letter-spacing:-0.31px">[NULL]</span></span><span class="c c5"><span style="letter-spacing:-0.61px">TSICU</span></span><span class="c c6"><span style="letter-spacing:0.09px">Trauma/surgical intensive care unit</span></span></div>
<div class="tr"><span class="c c0"><span style="letter-spacing:0.07px">18</span></span><span class="c c1"><span style="letter-spacing:0.07px">935333</span></span><span class="c c2"><span style="letter-spacing:-0.18px">TSICU ward #23</span></span><span class="c c3"><span style="letter-spacing:0.07px">4305366</span></span><span class="c c4 nul"><span style="letter-spacing:-0.31px">[NULL]</span></span><span class="c c5"><span style="letter-spacing:-0.61px">TSICU</span></span><span class="c c6"><span style="letter-spacing:0.09px">Trauma/surgical intensive care unit</span></span></div>
<div class="tr"><span class="c c0"><span style="letter-spacing:0.07px">19</span></span><span class="c c1"><span style="letter-spacing:0.07px">935334</span></span><span class="c c2"><span style="letter-spacing:-0.18px">TSICU ward #33</span></span><span class="c c3"><span style="letter-spacing:0.07px">4305366</span></span><span class="c c4 nul"><span style="letter-spacing:-0.31px">[NULL]</span></span><span class="c c5"><span style="letter-spacing:-0.61px">TSICU</span></span><span class="c c6"><span style="letter-spacing:0.09px">Trauma/surgical intensive care unit</span></span></div>
<div class="tr"><span class="c c0"><span style="letter-spacing:0.07px">20</span></span><span class="c c1"><span style="letter-spacing:0.07px">935325</span></span><span class="c c2"><span style="letter-spacing:-0.07px">MICU ward #12</span></span><span class="c c3"><span style="letter-spacing:0.07px">4305366</span></span><span class="c c4 nul"><span style="letter-spacing:-0.31px">[NULL]</span></span><span class="c c5"><span style="letter-spacing:-0.35px">MICU</span></span><span class="c c6"><span style="letter-spacing:0.03px">Medical intensive care unit</span></span></div>
</div>
<div id="vsb"><div class="abs" style="left:2px;top:15px;width:11px;height:156px;background:#c1c1c1"></div></div>
<div id="hsb"><div class="abs" style="left:15px;top:2px;width:876px;height:11px;background:#c1c1c1"></div></div>
<svg class="abs" style="left:230px;top:120px;width:1100px;height:648px" viewBox="230 120 1100 648">
  <path d="M239 136l3.500-4 3.500 4z" fill="#a3a3a3"/>
  <path d="M239 757.500l3.500 3.500 3.500-3.500z" fill="#505050"/>
  <path d="M1305 222l3.500-3.500 3.500 3.500z" fill="#a3a3a3"/>
  <path d="M1305 712l3.500 3.500 3.500-3.500z" fill="#505050"/>
  <path d="M269.300 725.300l-3.500 3.500 3.500 3.500z" fill="#a3a3a3"/>
  <path d="M1291.500 724.800l4.300 4-4.300 4z" fill="#505050"/>
</svg>
<div id="corner"></div>
<div class="vt" style="left:1327.500px;top:261px"><span style="letter-spacing:-1.09px">VALUE</span></div>
<div class="vt" style="left:1327.500px;top:369px"><span style="letter-spacing:-1.58px">GROUPING</span></div>
<svg class="abs" style="left:1320px;top:260px;width:40px;height:140px" viewBox="1320 260 40 140" fill="none">
  <path d="M1329.500 268h7v3.500h6.500v9.500c0 0.800-0.600 1.500-1.500 1.500h-12c-0.800 0-1.500-0.600-1.500-1.500v-11.500c0-0.900 0.700-1.500 1.500-1.500z" fill="#2d86cc"/>
  <path d="M1331.500 270h5v4h-0v6.800h-5z" fill="#8fc4ea"/>
  <path d="M1336.500 274h5v6.800h-5z" fill="#fff"/>
  <path d="M1340.300 267.600h2.400M1340.300 272.400h2.400M1341.500 267.600v4.800" stroke="#2d86cc" stroke-width="0.700"/>
  <circle cx="1335.800" cy="383.800" r="6.900" stroke="#2d86cc" stroke-width="1.200"/>
  <path d="M1332.800 380.800h1.700v1.700h-1.700zM1337.100 380.800h1.700v1.700h-1.700zM1332.800 385.100h1.700v1.700h-1.700zM1337.100 385.100h1.700v1.700h-1.700z" fill="#2d86cc"/>
</svg>
<div id="foot">
<svg class="abs" style="left:0;top:0;width:260px;height:31px" viewBox="252 737 260 31" fill="none">
  <path d="M275.300 758.100A6.200 6.200 0 1 1 280.100 753.900" stroke="#2d86cc" stroke-width="1.600"/>
  <path d="M277.900 752.200v4.500l4.300-1.200z" fill="#2d86cc"/>
  <path d="M290 750.200l3.300 3.200 3.300-3.200" stroke="#555" stroke-width="1.700"/>
  <!-- fetch icon -->
  <path d="M393.300 746c3.300 0 5 1.200 6.600 4 1.600-2.800 3.300-4 6.600-4" stroke="#2d86cc" stroke-width="1.400"/>
  <path d="M399.900 749.500v4.500" stroke="#2d86cc" stroke-width="1.400"/>
  <path d="M397.300 752.300l2.600 2.900 2.600-2.900z" fill="#2d86cc"/>
  <path d="M393.300 754v3.900h13.200v-3.900" stroke="#2d86cc" stroke-width="1.400"/>
  <!-- export icon -->
  <path d="M439.800 746h11.600" stroke="#2d86cc" stroke-width="1.400"/>
  <path d="M445.600 758.500v-8" stroke="#2d86cc" stroke-width="1.400"/>
  <path d="M442.600 752.600l3-3.300 3 3.300z" fill="#2d86cc"/>
</svg>
  <div id="cnt"><span style="letter-spacing:0.07px">200</span></div>
  <div class="t med" style="left:160px;top:7px;font-size:12px"><span style="letter-spacing:0.20px">61</span></div>
  <div class="t med" style="left:206px;top:7px;font-size:12px"><span style="letter-spacing:-0.59px">EXPORT</span></div>
  <div class="t" style="left:953px;top:7px;font-size:12.800px"><span style="letter-spacing:0.04px">61 row(s) fetched - 27ms</span></div>
</div>
</body>
</html>
